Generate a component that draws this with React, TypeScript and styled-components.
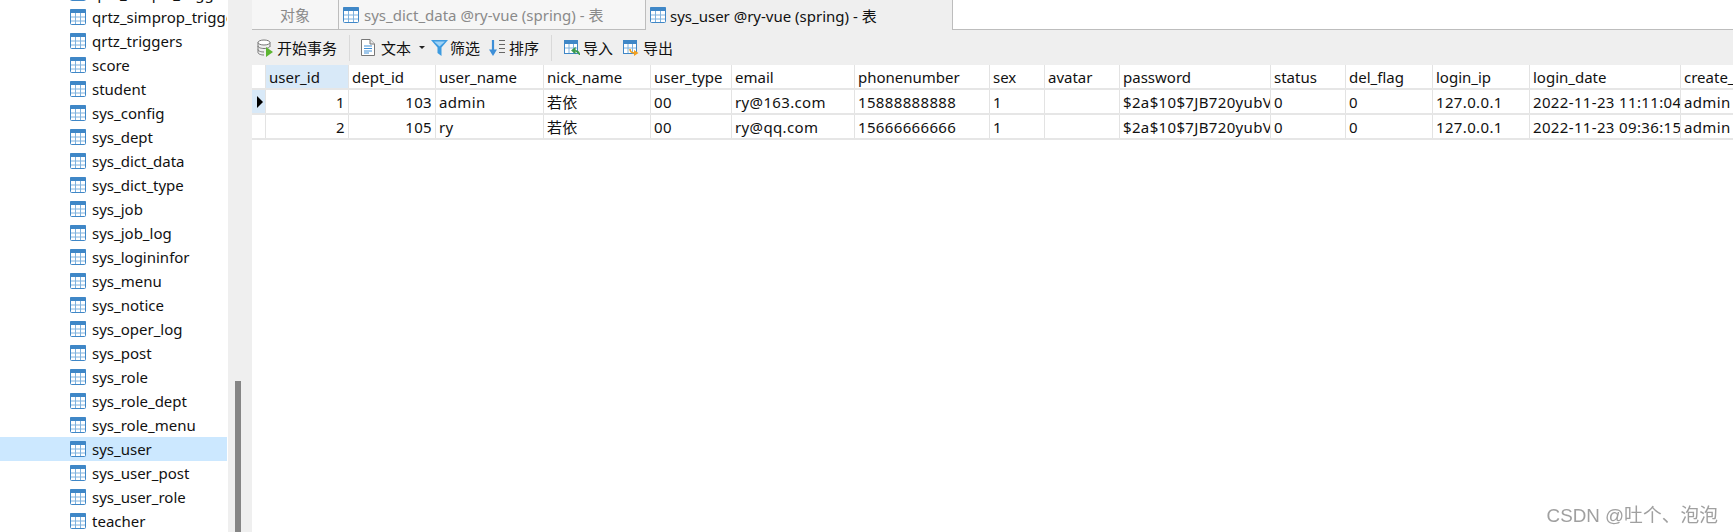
import styled, { createGlobalStyle } from 'styled-components';

const GlobalStyle = createGlobalStyle`
  html, body {
    margin: 0;
    padding: 0;
    height: 532px;
    overflow: hidden;
    background: #fff;
    font-family: "Noto Sans", "Noto Sans CJK SC", sans-serif;
    font-size: 15px;
    color: #111;
  }
`;

const Page = styled.div`
  position: relative;
  display: flex;
  width: 1733px;
  height: 532px;
  overflow: hidden;
`;

const Sidebar = styled.div`
  width: 228px;
  height: 532px;
  padding-right: 1px;
  box-sizing: border-box;
  overflow: hidden;
  flex-shrink: 0;
  background: #fff;
`;

const TableList = styled.ul`
  list-style: none;
  margin: -19px 0 0;
  padding: 0;
`;

const TableItem = styled.li<{ $selected?: boolean }>`
  display: flex;
  align-items: center;
  gap: 6px;
  height: 24px;
  padding-left: 70px;
  white-space: nowrap;
  overflow: hidden;
  background: ${({ $selected }) => ($selected ? '#cce8ff' : 'transparent')};
`;

const Gutter = styled.div`
  width: 24px;
  flex-shrink: 0;
  background: #efefef;
  display: flex;
  flex-direction: column;
  justify-content: flex-end;
  padding-left: 7px;
  box-sizing: border-box;
`;

const ScrollThumb = styled.div`
  width: 6px;
  height: 151px;
  background: #858585;
`;

const Main = styled.div`
  flex: 1;
  display: flex;
  flex-direction: column;
  min-width: 0;
`;

const TabBar = styled.div`
  display: flex;
  height: 30px;
  box-sizing: border-box;
  border-bottom: 1px solid #bdbdbd;
`;

const Tab = styled.div<{ $active?: boolean; $width: number; $center?: boolean }>`
  display: flex;
  align-items: center;
  justify-content: ${({ $center }) => ($center ? 'center' : 'flex-start')};
  gap: ${({ $active }) => ($active ? '4px' : '5px')};
  width: ${({ $width }) => $width}px;
  height: ${({ $active }) => ($active ? '30px' : '29px')};
  padding-left: ${({ $center }) => ($center ? '0' : '4px')};
  box-sizing: border-box;
  white-space: nowrap;
  color: ${({ $active }) => ($active ? '#111' : '#8a8a8a')};
  background: ${({ $active }) => ($active ? '#efefef' : '#f6f6f6')};
  border-right: 1px solid #bdbdbd;
`;

const Toolbar = styled.div`
  display: flex;
  align-items: center;
  height: 35px;
  padding-left: 5px;
  background: #efefef;
  flex-shrink: 0;
`;

const ToolButton = styled.div<{ $gap?: number; $left?: number }>`
  display: flex;
  align-items: center;
  gap: ${({ $gap }) => $gap ?? 4}px;
  margin-left: ${({ $left }) => $left ?? 0}px;
  white-space: nowrap;
  color: #111;
`;

const Separator = styled.div<{ $left: number }>`
  width: 1px;
  height: 26px;
  margin-left: ${({ $left }) => $left}px;
  background: #d9d9d9;
`;

const Caret = styled.span`
  width: 0;
  height: 0;
  margin-left: 2px;
  border-left: 3px solid transparent;
  border-right: 3px solid transparent;
  border-top: 3px solid #222;
`;

const Grid = styled.div`
  flex: 1;
  background: #fff;
  overflow: hidden;
`;

const Row = styled.div`
  display: flex;
  height: 25px;
  box-sizing: border-box;
  border-bottom: 2px solid #e6e6e6;
`;

const DataRow = styled(Row)`
  letter-spacing: 0.35px;
`;

const Cell = styled.div<{ $width: number; $right?: boolean; $active?: boolean }>`
  width: ${({ $width }) => $width}px;
  flex-shrink: 0;
  box-sizing: border-box;
  display: flex;
  align-items: center;
  justify-content: ${({ $right }) => ($right ? 'flex-end' : 'flex-start')};
  padding: 0 ${({ $right }) => ($right ? '3px' : '0')} 0 ${({ $right }) => ($right ? '0' : '3px')};
  border-right: 1px solid #e3e3e3;
  white-space: nowrap;
  overflow: hidden;
  background: ${({ $active }) => ($active ? '#d8e9f8' : '#fff')};
`;

const RowMarker = styled.div<{ $active?: boolean }>`
  width: 14px;
  flex-shrink: 0;
  box-sizing: border-box;
  display: flex;
  align-items: center;
  padding-left: 5px;
  border-right: 1px solid #e3e3e3;
  background: ${({ $active }) => ($active ? '#d8e9f8' : '#fff')};
`;

const MarkerArrow = styled.span`
  width: 0;
  height: 0;
  border-top: 6px solid transparent;
  border-bottom: 6px solid transparent;
  border-left: 6px solid #000;
`;

const Watermark = styled.div`
  position: absolute;
  right: 15px;
  bottom: 5px;
  font-family: "Liberation Sans", "Noto Sans CJK SC", sans-serif;
  font-size: 18.8px;
  color: #a0a0a0;
  white-space: nowrap;
  filter: blur(0.3px);
`;

const TableIcon = () => (
  <svg width="16" height="16" viewBox="0 0 16 16" style={{ flexShrink: 0 }}>
    <rect x="0.5" y="0.5" width="15" height="15" rx="1" fill="#fff" stroke="#3f87c7" />
    <rect x="0" y="0" width="16" height="4" rx="1" fill="#3f87c7" />
    <path d="M1 8h14M1 12h14M5.500 4v11M10.500 4v11" stroke="#7fb2de" strokeWidth="1" fill="none" />
  </svg>
);

const TransactionIcon = () => (
  <svg width="16" height="18" viewBox="0 0 16 18">
    <ellipse cx="7" cy="3.500" rx="6" ry="2.500" fill="#fff" stroke="#777" />
    <path d="M1 3.500v10c0 1.400 2.700 2.500 6 2.500M13 3.500v4M1 7c0 1.400 2.700 2.500 6 2.500s6-1 6-2.500M1 10.500c0 1.400 2.700 2.500 6 2.500" fill="none" stroke="#777" />
    <path d="M9 8l7 5-7 5z" fill="#5cb531" />
  </svg>
);

const TextIcon = () => (
  <svg width="14" height="17" viewBox="0 0 14 17">
    <path d="M.5.5h8.500l4.500 4.500v11.500h-13z" fill="#fff" stroke="#777" />
    <path d="M9 .5v4.500h4.500" fill="#e8e8e8" stroke="#777" />
    <path d="M3 7h8M3 9.500h8M3 12h8M3 14h5" stroke="#3f8fd6" />
  </svg>
);

const FilterIcon = () => (
  <svg width="17" height="17" viewBox="0 0 17 17">
    <path d="M0 1h17L10.500 8.500V17L6.500 14V8.500z" fill="#3d9be0" />
    <path d="M3 2.500h11L8.500 7.500z" fill="#9fd2f5" />
  </svg>
);

const SortIcon = () => (
  <svg width="16" height="18" viewBox="0 0 16 18">
    <path d="M4 1v12" stroke="#3d8fd8" strokeWidth="2.200" />
    <path d="M0 10.500h8L4 17z" fill="#3d8fd8" />
    <path d="M10 1.500h6M10 5.500h6M10 9.500h6M10 13.500h6" stroke="#666" />
  </svg>
);

const ImportIcon = () => (
  <svg width="16" height="16" viewBox="0 0 16 16">
    <rect x="0.5" y="0.500" width="13" height="13" fill="#fff" stroke="#3f87c7" />
    <rect x="0" y="0" width="14" height="4" fill="#3f87c7" />
    <path d="M1 8h12M5 4v9M9.500 4v9" stroke="#7fb2de" />
    <path d="M15.500 15c0-3-2-4.500-5-4.500M8 10.500l3-2.500v5z" fill="#3b9a4a" stroke="#3b9a4a" strokeWidth="1.200" />
  </svg>
);

const ExportIcon = () => (
  <svg width="16" height="16" viewBox="0 0 16 16">
    <rect x="0.5" y="0.500" width="13" height="13" fill="#fff" stroke="#3f87c7" />
    <rect x="0" y="0" width="14" height="4" fill="#3f87c7" />
    <path d="M1 8h12M5 4v9M9.500 4v9" stroke="#7fb2de" />
    <path d="M7 9c0 3 2 4 5 4" fill="none" stroke="#f0a020" strokeWidth="1.600" />
    <path d="M11 10l4.500 3L11 16z" fill="#f0a020" />
  </svg>
);

const tables = [
  'qrtz_simple_triggers',
  'qrtz_simprop_triggers',
  'qrtz_triggers',
  'score',
  'student',
  'sys_config',
  'sys_dept',
  'sys_dict_data',
  'sys_dict_type',
  'sys_job',
  'sys_job_log',
  'sys_logininfor',
  'sys_menu',
  'sys_notice',
  'sys_oper_log',
  'sys_post',
  'sys_role',
  'sys_role_dept',
  'sys_role_menu',
  'sys_user',
  'sys_user_post',
  'sys_user_role',
  'teacher',
];

const columns = [
  { name: 'user_id', width: 83, right: true },
  { name: 'dept_id', width: 87, right: true },
  { name: 'user_name', width: 108 },
  { name: 'nick_name', width: 107 },
  { name: 'user_type', width: 81 },
  { name: 'email', width: 123 },
  { name: 'phonenumber', width: 135 },
  { name: 'sex', width: 55 },
  { name: 'avatar', width: 75 },
  { name: 'password', width: 151 },
  { name: 'status', width: 75 },
  { name: 'del_flag', width: 87 },
  { name: 'login_ip', width: 97 },
  { name: 'login_date', width: 151 },
  { name: 'create_by', width: 80 },
];

const passwordHash = '$2a$10$7JB720yubVSZvUI0rEqK/.VqGOZTH.ulu33dHOiBE8ByOhJIrdAu2';

const rows = [
  ['1', '103', 'admin', '若依', '00', 'ry@163.com', '15888888888', '1', '', passwordHash, '0', '0', '127.0.0.1', '2022-11-23 11:11:04', 'admin'],
  ['2', '105', 'ry', '若依', '00', 'ry@qq.com', '15666666666', '1', '', passwordHash, '0', '0', '127.0.0.1', '2022-11-23 09:36:15', 'admin'],
];

const App = () => {
  return (
    <Page>
      <GlobalStyle />
      <Sidebar>
        <TableList>
          {tables.map(name => (
            <TableItem key={name} $selected={name === 'sys_user'}>
              <TableIcon />
              {name}
            </TableItem>
          ))}
        </TableList>
      </Sidebar>
      <Gutter>
        <ScrollThumb />
      </Gutter>
      <Main>
        <TabBar>
          <Tab $width={87} $center>对象</Tab>
          <Tab $width={307}>
            <TableIcon />
            sys_dict_data @ry-vue (spring) - 表
          </Tab>
          <Tab $width={307} $active>
            <TableIcon />
            sys_user @ry-vue (spring) - 表
          </Tab>
        </TabBar>
        <Toolbar>
          <ToolButton>
            <TransactionIcon />
            开始事务
          </ToolButton>
          <Separator $left={12} />
          <ToolButton $left={11} $gap={6}>
            <TextIcon />
            文本
            <Caret />
          </ToolButton>
          <ToolButton $left={6} $gap={2}>
            <FilterIcon />
            筛选
          </ToolButton>
          <ToolButton $left={9}>
            <SortIcon />
            排序
          </ToolButton>
          <Separator $left={12} />
          <ToolButton $left={12} $gap={3}>
            <ImportIcon />
            导入
          </ToolButton>
          <ToolButton $left={10} $gap={4}>
            <ExportIcon />
            导出
          </ToolButton>
        </Toolbar>
        <Grid>
          <Row>
            <RowMarker />
            {columns.map((col, i) => (
              <Cell key={col.name} $width={col.width} $active={i === 0}>
                {col.name}
              </Cell>
            ))}
          </Row>
          {rows.map((row, r) => (
            <DataRow key={r}>
              <RowMarker $active={r === 0}>{r === 0 && <MarkerArrow />}</RowMarker>
              {row.map((value, c) => (
                <Cell key={c} $width={columns[c].width} $right={columns[c].right}>
                  {value}
                </Cell>
              ))}
            </DataRow>
          ))}
        </Grid>
      </Main>
      <Watermark>CSDN @吐个、泡泡</Watermark>
    </Page>
  );
};

export default App;
